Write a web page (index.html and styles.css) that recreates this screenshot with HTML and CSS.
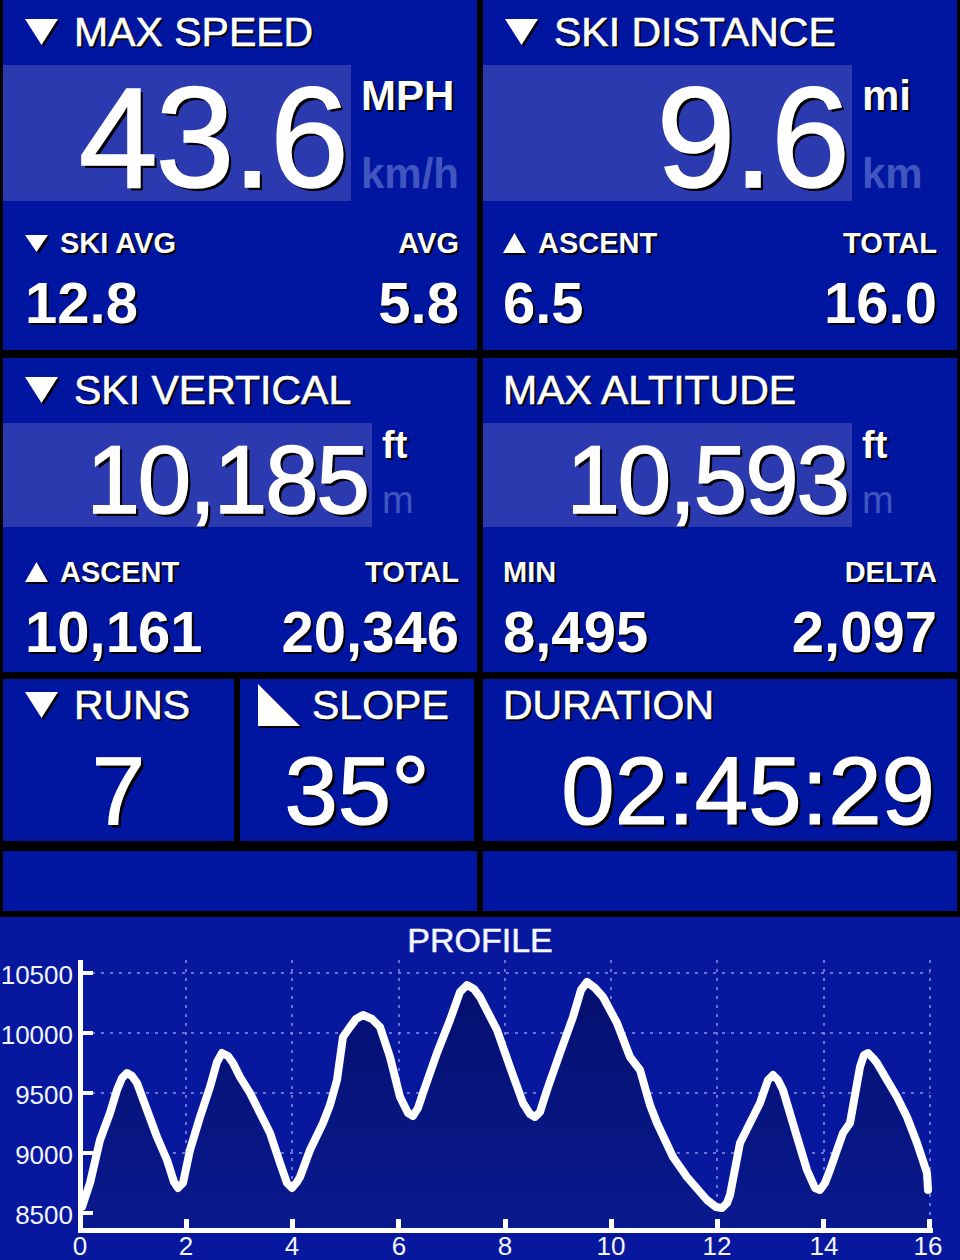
FILE: index.html
```html
<!DOCTYPE html>
<html lang="en">
<head>
<meta charset="utf-8">
<title>Ski Tracker</title>
<link rel="stylesheet" href="styles.css">
</head>
<body>
<div class="screen">

  <div class="row row-a">
    <section class="panel panel-a">
      <div class="hdr">
        <svg class="ico-hdr" width="33" height="26" viewBox="0 0 33 26"><polygon points="2,2 35,2 18.5,28" fill="#000"/><polygon points="0,0 33,0 16.5,26" fill="#fff"/></svg>
        <span>MAX SPEED</span>
      </div>
      <div class="val-row">
        <div class="val-box val-box-narrow">43.6</div>
        <div class="units">
          <span class="u-on">MPH</span>
          <span class="u-off">km/h</span>
        </div>
      </div>
      <div class="sub">
        <span class="lbl"><svg class="ico-sm" width="23" height="17" viewBox="0 0 23 17"><polygon points="2,2 25,2 13.5,19" fill="#000"/><polygon points="0,0 23,0 11.5,17" fill="#fff"/></svg>SKI AVG</span>
        <span class="lbl">AVG</span>
      </div>
      <div class="sub-vals"><span>12.8</span><span>5.8</span></div>
    </section>

    <section class="panel panel-a">
      <div class="hdr">
        <svg class="ico-hdr" width="33" height="26" viewBox="0 0 33 26"><polygon points="2,2 35,2 18.5,28" fill="#000"/><polygon points="0,0 33,0 16.5,26" fill="#fff"/></svg>
        <span>SKI DISTANCE</span>
      </div>
      <div class="val-row">
        <div class="val-box">9.6</div>
        <div class="units">
          <span class="u-on">mi</span>
          <span class="u-off">km</span>
        </div>
      </div>
      <div class="sub sub-r">
        <span class="lbl"><svg class="ico-sm" width="23" height="20" viewBox="0 0 23 20"><polygon points="13.5,2 25,22 2,22" fill="#000"/><polygon points="11.5,0 23,20 0,20" fill="#fff"/></svg>ASCENT</span>
        <span class="lbl">TOTAL</span>
      </div>
      <div class="sub-vals sub-r"><span>6.5</span><span>16.0</span></div>
    </section>
  </div>

  <div class="row row-b">
    <section class="panel panel-b">
      <div class="hdr">
        <svg class="ico-hdr" width="33" height="26" viewBox="0 0 33 26"><polygon points="2,2 35,2 18.5,28" fill="#000"/><polygon points="0,0 33,0 16.5,26" fill="#fff"/></svg>
        <span>SKI VERTICAL</span>
      </div>
      <div class="val-row">
        <div class="val-box">10,185</div>
        <div class="units">
          <span class="u-on">ft</span>
          <span class="u-off">m</span>
        </div>
      </div>
      <div class="sub">
        <span class="lbl"><svg class="ico-sm" width="23" height="20" viewBox="0 0 23 20"><polygon points="13.5,2 25,22 2,22" fill="#000"/><polygon points="11.5,0 23,20 0,20" fill="#fff"/></svg>ASCENT</span>
        <span class="lbl">TOTAL</span>
      </div>
      <div class="sub-vals"><span>10,161</span><span>20,346</span></div>
    </section>

    <section class="panel panel-b">
      <div class="hdr hdr-plain">
        <span>MAX ALTITUDE</span>
      </div>
      <div class="val-row">
        <div class="val-box">10,593</div>
        <div class="units">
          <span class="u-on">ft</span>
          <span class="u-off">m</span>
        </div>
      </div>
      <div class="sub sub-r">
        <span class="lbl">MIN</span>
        <span class="lbl">DELTA</span>
      </div>
      <div class="sub-vals sub-r"><span>8,495</span><span>2,097</span></div>
    </section>
  </div>

  <div class="row row-c">
    <div class="pair">
      <section class="panel panel-c panel-runs">
        <div class="hdr">
          <svg class="ico-hdr" width="33" height="26" viewBox="0 0 33 26"><polygon points="2,2 35,2 18.5,28" fill="#000"/><polygon points="0,0 33,0 16.5,26" fill="#fff"/></svg>
          <span>RUNS</span>
        </div>
        <div class="count count-center">7</div>
      </section>
      <section class="panel panel-c panel-slope">
        <div class="hdr hdr-slope">
          <svg class="ico-slope" width="42" height="42" viewBox="0 0 42 42"><polygon points="2,2 2,44 44,44" fill="#000"/><polygon points="0,0 0,42 42,42" fill="#fff"/></svg>
          <span>SLOPE</span>
        </div>
        <div class="count count-center">35°</div>
      </section>
    </div>
    <section class="panel panel-c">
      <div class="hdr hdr-plain">
        <span>DURATION</span>
      </div>
      <div class="count count-right">02:45:29</div>
    </section>
  </div>

  <div class="row row-d">
    <section class="panel"></section>
    <section class="panel"></section>
  </div>

  <section class="chart">
    <div class="chart-title">PROFILE</div>
    <svg class="chart-svg" width="960" height="300" viewBox="0 960 960 300">
      <defs>
        <linearGradient id="fillg" x1="0" y1="0" x2="0" y2="1">
          <stop offset="0" stop-color="#040f6e"/>
          <stop offset="1" stop-color="#0a1a8e"/>
        </linearGradient>
      </defs>
      <g class="grid">
        <line x1="92" y1="973" x2="930" y2="973"/>
        <line x1="92" y1="1033" x2="930" y2="1033"/>
        <line x1="92" y1="1093" x2="930" y2="1093"/>
        <line x1="92" y1="1153" x2="930" y2="1153"/>
        <line x1="92" y1="1213" x2="930" y2="1213"/>
        <line x1="186" y1="960" x2="186" y2="1222"/>
        <line x1="292" y1="960" x2="292" y2="1222"/>
        <line x1="399" y1="960" x2="399" y2="1222"/>
        <line x1="505" y1="960" x2="505" y2="1222"/>
        <line x1="611" y1="960" x2="611" y2="1222"/>
        <line x1="717" y1="960" x2="717" y2="1222"/>
        <line x1="824" y1="960" x2="824" y2="1222"/>
        <line x1="930" y1="960" x2="930" y2="1222"/>
      </g>
      <polygon fill="url(#fillg)" points="82,1228 82,1207 90,1183 100,1140 110,1113 117,1090 122,1078 127,1073 132,1076 137,1083 147,1110 157,1137 167,1160 174,1182 178,1188 183,1183 190,1150 200,1117 210,1087 217,1062 222,1053 228,1056 233,1063 240,1077 250,1093 260,1113 270,1133 280,1163 287,1183 292,1188 297,1182 300,1177 310,1150 323,1123 330,1105 337,1080 343,1037 350,1027 356,1019 363,1015 372,1019 380,1027 390,1057 400,1097 408,1113 413,1116 418,1108 423,1093 437,1053 450,1020 460,992 467,985 474,989 480,997 497,1030 510,1067 523,1103 530,1114 535,1117 540,1112 547,1090 560,1053 573,1017 581,990 587,982 595,988 603,997 617,1023 630,1057 640,1070 650,1105 657,1123 673,1157 687,1177 707,1200 716,1207 722,1208 727,1203 730,1195 740,1143 750,1123 760,1103 768,1080 773,1075 778,1080 783,1090 797,1137 807,1170 815,1188 820,1190 825,1183 830,1170 843,1133 850,1123 860,1067 864,1055 868,1053 873,1058 877,1063 887,1080 897,1097 907,1117 917,1143 927,1173 928,1190 928,1228"/>
      <polyline class="curve" points="82,1207 90,1183 100,1140 110,1113 117,1090 122,1078 127,1073 132,1076 137,1083 147,1110 157,1137 167,1160 174,1182 178,1188 183,1183 190,1150 200,1117 210,1087 217,1062 222,1053 228,1056 233,1063 240,1077 250,1093 260,1113 270,1133 280,1163 287,1183 292,1188 297,1182 300,1177 310,1150 323,1123 330,1105 337,1080 343,1037 350,1027 356,1019 363,1015 372,1019 380,1027 390,1057 400,1097 408,1113 413,1116 418,1108 423,1093 437,1053 450,1020 460,992 467,985 474,989 480,997 497,1030 510,1067 523,1103 530,1114 535,1117 540,1112 547,1090 560,1053 573,1017 581,990 587,982 595,988 603,997 617,1023 630,1057 640,1070 650,1105 657,1123 673,1157 687,1177 707,1200 716,1207 722,1208 727,1203 730,1195 740,1143 750,1123 760,1103 768,1080 773,1075 778,1080 783,1090 797,1137 807,1170 815,1188 820,1190 825,1183 830,1170 843,1133 850,1123 860,1067 864,1055 868,1053 873,1058 877,1063 887,1080 897,1097 907,1117 917,1143 927,1173 928,1190"/>
      <g class="axis">
        <rect x="78" y="957" width="5" height="276"/>
        <rect x="78" y="1228" width="855" height="5"/>
        <rect x="83" y="971" width="10" height="4"/>
        <rect x="83" y="1031" width="10" height="4"/>
        <rect x="83" y="1091" width="10" height="4"/>
        <rect x="83" y="1151" width="10" height="4"/>
        <rect x="83" y="1211" width="10" height="4"/>
        <rect x="184" y="1219" width="5" height="10"/>
        <rect x="290" y="1219" width="5" height="10"/>
        <rect x="396" y="1219" width="5" height="10"/>
        <rect x="503" y="1219" width="5" height="10"/>
        <rect x="609" y="1219" width="5" height="10"/>
        <rect x="715" y="1219" width="5" height="10"/>
        <rect x="821" y="1219" width="5" height="10"/>
        <rect x="927" y="1219" width="5" height="10"/>
      </g>
      <g class="ylabels">
        <text x="73" y="984">10500</text>
        <text x="73" y="1044">10000</text>
        <text x="73" y="1104">9500</text>
        <text x="73" y="1164">9000</text>
        <text x="73" y="1224">8500</text>
      </g>
      <g class="xlabels">
        <text x="80" y="1255">0</text>
        <text x="186" y="1255">2</text>
        <text x="292" y="1255">4</text>
        <text x="399" y="1255">6</text>
        <text x="505" y="1255">8</text>
        <text x="611" y="1255">10</text>
        <text x="717" y="1255">12</text>
        <text x="824" y="1255">14</text>
        <text x="928" y="1255">16</text>
      </g>
    </svg>
  </section>

</div>
</body>
</html>
```

FILE: styles.css
```css
* { box-sizing: border-box; }

html, body {
  margin: 0;
  padding: 0;
  background: #000;
}

body {
  width: 960px;
  height: 1260px;
  overflow: hidden;
  font-family: "Liberation Sans", Arial, Helvetica, sans-serif;
  color: #fff;
}

.screen {
  display: flex;
  flex-direction: column;
  width: 960px;
  height: 1260px;
}

.row {
  display: grid;
  grid-template-columns: 474px 474px;
  grid-template-rows: 100%;
  column-gap: 6px;
  padding: 0 3px;
  flex: none;
}

.row-a { height: 350px; margin-bottom: 8px; }
.row-b { height: 314px; margin-bottom: 7px; }
.row-c { height: 162px; margin-bottom: 10px; }
.row-d { height: 60px;  margin-bottom: 6px; }

.panel {
  background: #0016a0;
  text-shadow: 2px 2px 0 #000;
  min-height: 0;
}

/* header line */
.hdr {
  display: flex;
  align-items: center;
  gap: 16px;
  height: 40px;
  margin: 12px 0 13px;
  padding-left: 22px;
  font-size: 41px;
  line-height: 40px;
  white-space: nowrap;
  -webkit-text-stroke: 0.6px #fff;
}

.hdr-plain { padding-left: 20px; }

.ico-hdr, .ico-sm, .ico-slope {
  overflow: visible;
  flex: none;
}

/* big value row */
.val-row {
  display: flex;
}

.val-box {
  width: 369px;
  background: #2b3aae;
  text-align: right;
  padding-right: 4px;
  white-space: nowrap;
  text-shadow: 3px 3px 0 #000;
  -webkit-text-stroke: 1.6px #fff;
}

.val-box-narrow { width: 348px; }

.units {
  display: flex;
  flex-direction: column;
  padding-left: 10px;
  font-weight: bold;
  white-space: nowrap;
}

.u-off {
  color: #4155c0;
  text-shadow: none;
}

.panel-a .val-box {
  height: 136px;
  font-size: 142px;
  line-height: 126px;
  padding-top: 10px;
  letter-spacing: -2px;
}

.panel-a .units { font-size: 42px; line-height: 40px; }
.panel-a .u-on { margin-top: 11px; }
.panel-a .u-off { margin-top: 38px; }

.panel-b .val-box {
  height: 104px;
  font-size: 96px;
  line-height: 95px;
  padding-top: 9px;
  letter-spacing: -2px;
}

.panel-b .units { font-size: 38px; line-height: 38px; }
.panel-b .u-on { margin-top: 3px; }
.panel-b .u-off { margin-top: 17px; font-weight: normal; }

/* secondary labels & values */
.sub {
  display: flex;
  justify-content: space-between;
  padding: 0 18px 0 22px;
  font-size: 29px;
  line-height: 28px;
  font-weight: bold;
  white-space: nowrap;
}

.panel-a .sub { margin-top: 28px; }
.panel-b .sub { margin-top: 31px; }

.sub-r { padding-left: 20px; padding-right: 20px; }

.lbl {
  display: inline-flex;
  align-items: center;
  gap: 12px;
}

.sub-vals {
  display: flex;
  justify-content: space-between;
  margin-top: 18px;
  padding: 0 18px 0 22px;
  font-size: 58px;
  line-height: 56px;
  font-weight: bold;
  white-space: nowrap;
}

.sub-vals.sub-r { padding-left: 20px; padding-right: 20px; }

/* row c */
.pair {
  display: flex;
  gap: 6px;
  min-height: 0;
}

.panel-runs { width: 231px; }
.panel-slope { width: 234px; }

.panel-c .hdr { margin: 6px 0 16px; }

.hdr-slope {
  gap: 12px;
  padding-left: 18px;
}

.count {
  font-size: 96px;
  line-height: 100px;
  white-space: nowrap;
  text-shadow: 3px 3px 0 #000;
  -webkit-text-stroke: 1.2px #fff;
}

.count-center { text-align: center; }
.count-right { text-align: right; padding-right: 22px; }

/* chart */
.chart {
  flex: 1;
  background: #08189e;
  display: flex;
  flex-direction: column;
}

.chart-title {
  height: 43px;
  padding-top: 3px;
  font-size: 34px;
  line-height: 40px;
  text-align: center;
  color: #f4f6ff;
  -webkit-text-stroke: 0.5px #f4f6ff;
}

.chart-svg {
  display: block;
}

.grid line {
  stroke: #8494e6;
  stroke-width: 1.5;
  stroke-dasharray: 3 6;
}

.curve {
  fill: none;
  stroke: #fff;
  stroke-width: 8;
  stroke-linejoin: round;
  stroke-linecap: round;
}

.axis rect { fill: #fff; }

.ylabels text,
.xlabels text {
  fill: #f2f4ff;
  font-family: "Liberation Sans", Arial, Helvetica, sans-serif;
  font-size: 26px;
}

.ylabels text { text-anchor: end; }
.xlabels text { text-anchor: middle; }
```
